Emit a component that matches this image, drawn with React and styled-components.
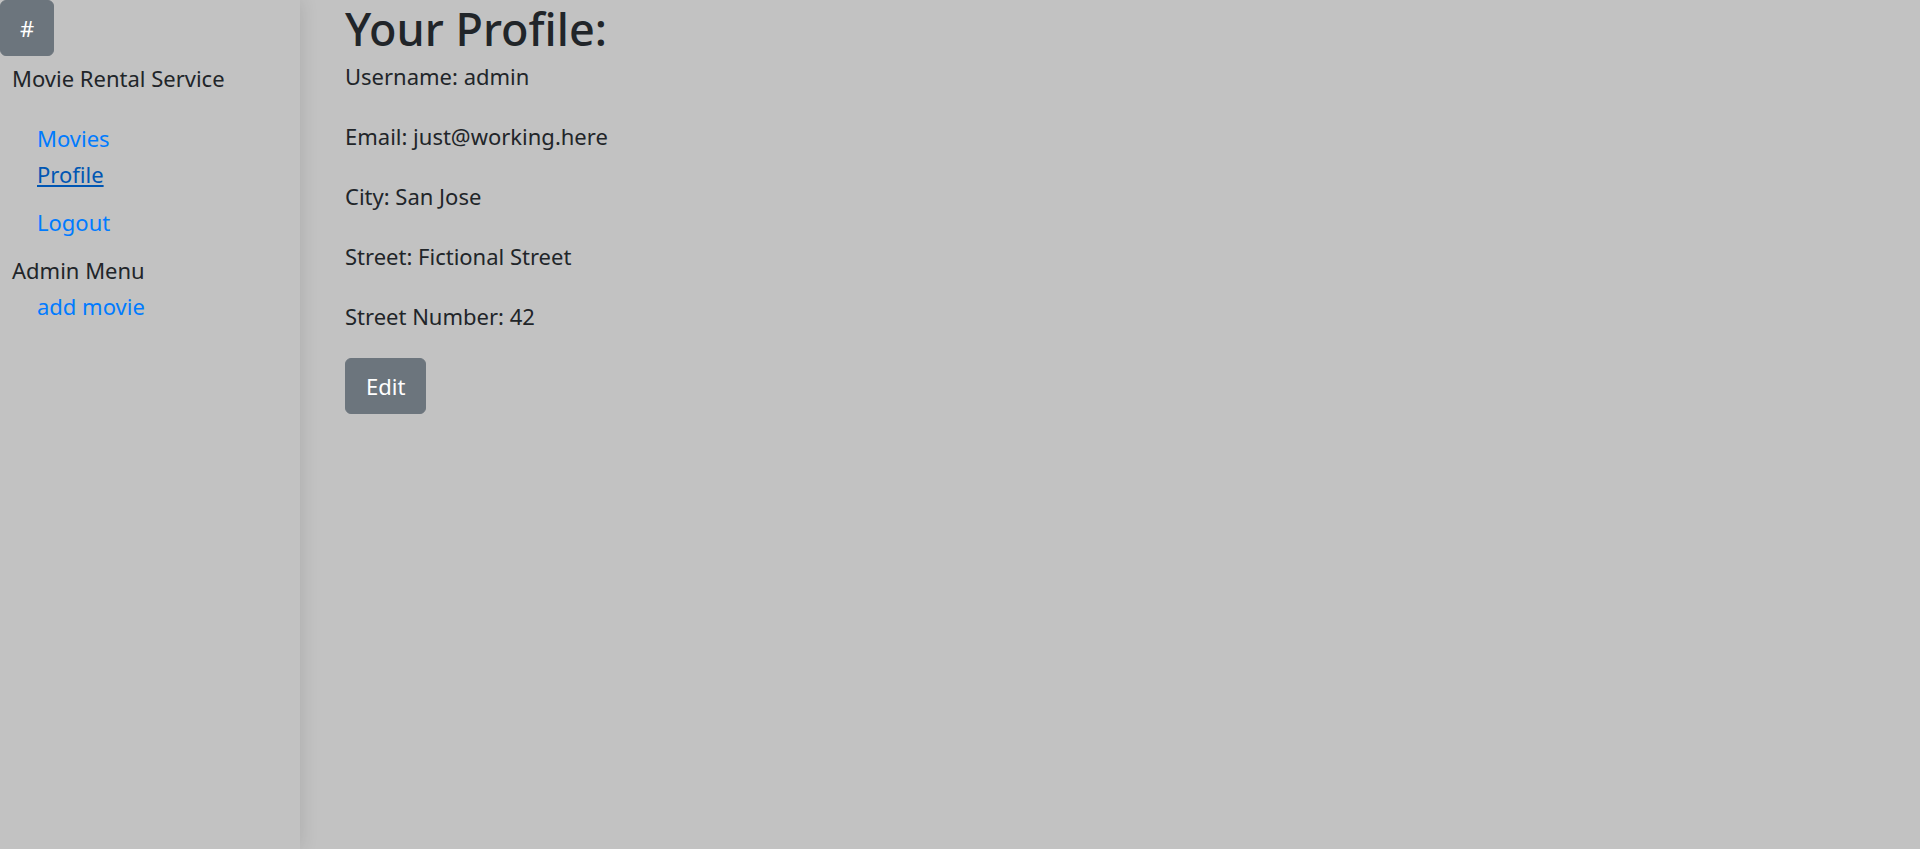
import React from "react";
import styled, { createGlobalStyle } from "styled-components";

const GlobalStyle = createGlobalStyle`
  html, body {
    margin: 0;
    padding: 0;
    background: #c2c2c2;
  }
  body {
    font-family: "Noto Sans", "Open Sans", sans-serif;
    font-size: 22px;
    line-height: 36px;
    color: #212529;
  }
  * { box-sizing: border-box; }
`;

const Layout = styled.div`
  display: flex;
  min-height: 100vh;
`;

const Sidebar = styled.aside`
  width: 300px;
  flex: 0 0 300px;
  background: #c2c2c2;
  box-shadow: 0 0 18px rgba(0, 0, 0, 0.12);
  position: relative;
  z-index: 1;
  display: flex;
  flex-direction: column;
  align-items: flex-start;
`;

const Button = styled.button`
  font-family: inherit;
  font-size: 22px;
  line-height: 36px;
  color: #fff;
  background: #6c757d;
  border: 1.5px solid #6c757d;
  border-radius: 6px;
  padding: 9px ${(p) => p.$px || 19}px;
  cursor: pointer;
`;

const Brand = styled.div`
  margin: 4px 0 0 12px;
`;

const NavList = styled.ul`
  list-style: none;
  margin: ${(p) => p.$mt || 0}px 0 0;
  padding: 0 0 0 37px;
  display: flex;
  flex-direction: column;
`;

const NavLink = styled.a`
  color: ${(p) => (p.$active ? "#0056b3" : "#007bff")};
  text-decoration: ${(p) => (p.$active ? "underline" : "none")};
  cursor: pointer;
`;

const SectionTitle = styled.div`
  margin: 12px 0 0 12px;
`;

const Main = styled.main`
  flex: 1;
  padding-left: 45px;
`;

const Heading = styled.h2`
  font-size: 45px;
  font-weight: 500;
  line-height: 58px;
  margin: 0;
`;

const Field = styled.p`
  margin: 0 0 24px;
`;

export default function App() {
  return (
    <>
      <GlobalStyle />
      <Layout>
        <Sidebar>
          <Button>#</Button>
          <Brand>Movie Rental Service</Brand>
          <NavList $mt={24}>
            <li><NavLink href="#">Movies</NavLink></li>
            <li><NavLink href="#" $active>Profile</NavLink></li>
          </NavList>
          <NavList $mt={12}>
            <li><NavLink href="#">Logout</NavLink></li>
          </NavList>
          <SectionTitle>Admin Menu</SectionTitle>
          <NavList>
            <li><NavLink href="#">add movie</NavLink></li>
          </NavList>
        </Sidebar>
        <Main>
          <Heading>Your Profile:</Heading>
          <Field>Username: admin</Field>
          <Field>Email: just@working.here</Field>
          <Field>City: San Jose</Field>
          <Field>Street: Fictional Street</Field>
          <Field>Street Number: 42</Field>
          <Button $px={20}>Edit</Button>
        </Main>
      </Layout>
    </>
  );
}
